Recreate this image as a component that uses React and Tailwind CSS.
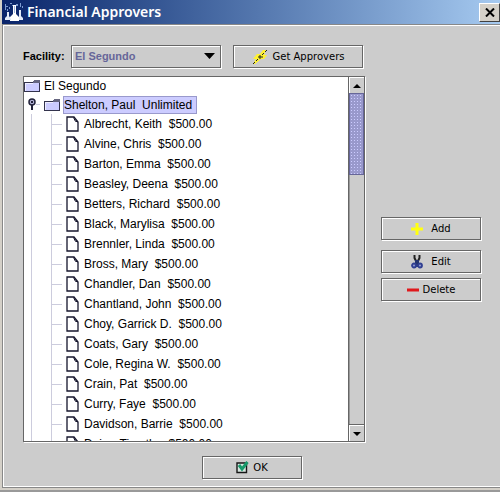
import React from "react";

const approvers = [
  "Albrecht, Keith",
  "Alvine, Chris",
  "Barton, Emma",
  "Beasley, Deena",
  "Betters, Richard",
  "Black, Marylisa",
  "Brennler, Linda",
  "Bross, Mary",
  "Chandler, Dan",
  "Chantland, John",
  "Choy, Garrick D.",
  "Coats, Gary",
  "Cole, Regina W.",
  "Crain, Pat",
  "Curry, Faye",
  "Davidson, Barrie",
  "Daisy, Timothy",
];

function FlaskIcon() {
  return (
    <svg width="20" height="20" viewBox="0 0 20 20" aria-hidden="true">
      <path d="M1 2h1v2h2v1H2v3H1zM6 1h2v1H6zM12 2h2v2h-2zM16 1h1v4h-1zM3 7h1v2H3zM18 4h1v2h-1zM5 5h1v2H5zM8 3h1v1H8z" fill="#7d9bd0" />
      <path d="M9 3h3v9l3 3v4H6v-4l3-3z" fill="#fff" />
      <path d="M3 10h2v4l2 3v1H1v-2l2-2zM15 8h2v6l2 2v2h-4v-3z" fill="#e4ebf7" />
      <path d="M10 4h1v7h-1z" fill="#9fb4dc" />
    </svg>
  );
}

function FolderIcon() {
  return (
    <svg width="16" height="14" viewBox="0 0 16 14" shapeRendering="crispEdges" aria-hidden="true">
      <path d="M0 3h9l1-1h6v11H0z" fill="#33334d" />
      <path d="M1 4h8l1-1h5v9H1z" fill="#ccccff" />
      <path d="M1 4h8v1H2v7H1z" fill="#eeeeff" />
      <path d="M9 3l1-2h5l1 1v2H9z" fill="#666680" />
    </svg>
  );
}

function PageIcon() {
  return (
    <svg width="14" height="16" viewBox="0 0 14 16" aria-hidden="true">
      <path d="M1 1h7l4 5v9H1z" fill="#fff" stroke="#15152c" strokeWidth="1.3" />
      <path d="M8 1v2l1 1v1l3 1" fill="none" stroke="#15152c" />
    </svg>
  );
}

function HandleIcon() {
  return (
    <svg width="8" height="13" viewBox="0 0 8 13" aria-hidden="true">
      <circle cx="4" cy="4" r="3" fill="#b4b4d8" stroke="#22223a" strokeWidth="1.5" />
      <path d="M3 3h2v2H3z" fill="#22223a" />
      <path d="M4 7v5" stroke="#22223a" strokeWidth="2" />
    </svg>
  );
}

function BoltIcon() {
  return (
    <svg width="16" height="16" viewBox="0 0 16 16" aria-hidden="true">
      <path d="M11 1h3l-2 5h3l-3 4H9l-6 5H1l3-5H1l4-5h3z" fill="#fff22e" />
      <path d="M15 1l-2 2M12 4l-2 2M6 8h5M8 6v4M6 10l-2 2M3 13l-2 2" fill="none" stroke="#222" />
    </svg>
  );
}

function PlusIcon() {
  return (
    <svg width="12" height="12" viewBox="0 0 12 12" aria-hidden="true">
      <path d="M4.500 0h3v4.500H12v3H7.500V12h-3V7.500H0v-3h4.500z" fill="#ffff12" />
    </svg>
  );
}

function ScissorsIcon() {
  return (
    <svg width="12" height="14" viewBox="0 0 12 14" aria-hidden="true">
      <path d="M3.500 0v3L6 8l2.500-5V0" fill="none" stroke="#222" strokeWidth="2" />
      <path d="M4 5h4v5l1 2H3l1-2z" fill="#25356f" />
      <circle cx="3" cy="10.5" r="2" fill="#8f9ad0" stroke="#303f92" strokeWidth="1.8" />
      <circle cx="9" cy="10.5" r="2" fill="#8f9ad0" stroke="#303f92" strokeWidth="1.8" />
    </svg>
  );
}

function MinusIcon() {
  return (
    <svg width="12" height="4" viewBox="0 0 12 4" aria-hidden="true">
      <path d="M0 0.5h12v3H0z" fill="#e0191c" />
    </svg>
  );
}

function CheckIcon() {
  return (
    <svg width="13" height="13" viewBox="0 0 13 13" aria-hidden="true">
      <path d="M1 2h9.500v9.500H1z" fill="#d8e6e0" stroke="#161616" strokeWidth="1.4" />
      <path d="M3 4l3 4 5.500-7" fill="none" stroke="#16996a" strokeWidth="3" />
    </svg>
  );
}

function MetalButton({ icon, children, className = "" }) {
  return (
    <button
      type="button"
      className={`flex h-[23px] items-center justify-center border border-[#666] bg-[#ccc] font-['DejaVu_Sans',sans-serif] text-[10px] leading-3 text-black shadow-[1px_1px_0_#fff,inset_1px_1px_0_#fff] ${className}`}
    >
      {icon}
      <span>{children}</span>
    </button>
  );
}

function TreeLeaf({ name }) {
  return (
    <li className="flex h-5 items-center">
      <span className="h-px w-[10px] bg-[#ccccdd]" />
      <span className="ml-1">
        <PageIcon />
      </span>
      <span className="ml-1 whitespace-pre">{`${name}  $500.00`}</span>
    </li>
  );
}

function ScrollBar() {
  return (
    <div className="flex w-4 flex-col border-l border-[#666] bg-[#ccc]">
      <button type="button" aria-label="Scroll up" className="flex h-4 items-center justify-center border-t border-l border-white">
        <svg width="8" height="4" viewBox="0 0 8 4"><path d="M4 0l4 4H0z" /></svg>
      </button>
      <div className="h-[82px] border border-[#666699] bg-[#9999cc] bg-[radial-gradient(#ccccff_25%,transparent_30%)] bg-size-[3px_3px]" />
      <div className="flex-1 border-l border-[#999]" />
      <button type="button" aria-label="Scroll down" className="flex h-4 items-center justify-center border-t border-l border-white shadow-[0_-1px_0_#666]">
        <svg width="8" height="4" viewBox="0 0 8 4"><path d="M0 0h8L4 4z" /></svg>
      </button>
    </div>
  );
}

export default function App() {
  return (
    <div className="flex h-screen flex-col border-b-2 border-[#999] bg-[#d4d0c8] pl-[2px] font-['Liberation_Sans',Arial,sans-serif] text-[12px] text-black">
      <header className="flex h-6 shrink-0 items-center bg-linear-to-r from-[#0a246a] to-[#a6caf0] pl-[2px]">
        <FlaskIcon />
        <h1 className="ml-[3px] flex-1 font-['Noto_Sans',sans-serif] text-[14px] font-semibold leading-5 text-white">Financial Approvers</h1>
        <button type="button" aria-label="Close" className="flex h-[19px] w-[21px] items-center justify-center border border-t-white border-r-[#404040] border-b-[#404040] border-l-white bg-[#d4d0c8]">
          <svg width="10" height="9" viewBox="0 0 10 9"><path d="M1 0.500l8 8M9 0.500l-8 8" stroke="#000" strokeWidth="2" /></svg>
        </button>
      </header>
      <main className="mb-[2px] flex min-h-0 flex-1 flex-col border-y border-l border-[#888] bg-[#ccc]">
        <div className="flex min-h-0 flex-1 flex-col border-y border-l border-white pr-[19px] pb-[7px] pl-[19px] pt-[19px]">
          <div className="flex items-center">
            <label htmlFor="facility" className="w-[48px] shrink-0 whitespace-nowrap text-[11px] font-bold">Facility:</label>
            <div className="relative w-[150px]">
              <select id="facility" className="block h-[23px] w-full appearance-none border border-[#666] bg-[#ccc] pl-[3px] text-[11px] font-bold text-[#666699] shadow-[1px_1px_0_#fff,inset_1px_1px_0_#fff]">
                <option>El Segundo</option>
              </select>
              <svg className="pointer-events-none absolute top-2 right-[6px]" width="11" height="6" viewBox="0 0 11 6"><path d="M0 0h11L5.500 6z" /></svg>
            </div>
            <MetalButton icon={<BoltIcon />} className="ml-3 w-[130px] gap-[5px]">Get Approvers</MetalButton>
          </div>
          <div className="mt-2 flex min-h-0 flex-1 gap-4">
            <div className="flex min-w-0 flex-1 border border-[#666] bg-white shadow-[1px_1px_0_#fff]">
              <div className="min-w-0 flex-1 overflow-hidden leading-4">
                <div className="flex h-[18px] items-center gap-1">
                  <FolderIcon />
                  <span>El Segundo</span>
                </div>
                <div className="flex h-[19px] items-center pl-1">
                  <HandleIcon />
                  <span className="mr-1 h-px w-1 bg-[#ccccdd]" />
                  <FolderIcon />
                  <span className="ml-[3px] border border-[#9999cc] bg-[#ccccff] pr-1 whitespace-pre">Shelton, Paul  Unlimited</span>
                </div>
                <div className="ml-[7px] border-l border-[#ccccdd] pl-[19px]">
                  <ul className="border-l border-[#ccccdd]">
                    {approvers.map((name) => (
                      <TreeLeaf key={name} name={name} />
                    ))}
                  </ul>
                </div>
              </div>
              <ScrollBar />
            </div>
            <div className="flex w-[100px] flex-col pt-[141px]">
              <MetalButton icon={<PlusIcon />} className="gap-2">Add</MetalButton>
              <MetalButton icon={<ScissorsIcon />} className="mt-[10px] gap-2">Edit</MetalButton>
              <MetalButton icon={<MinusIcon />} className="mt-[5px] gap-1">Delete</MetalButton>
            </div>
          </div>
          <div className="mt-[14px] flex justify-center">
            <MetalButton icon={<CheckIcon />} className="w-[100px] gap-1">OK</MetalButton>
          </div>
        </div>
      </main>
    </div>
  );
}
